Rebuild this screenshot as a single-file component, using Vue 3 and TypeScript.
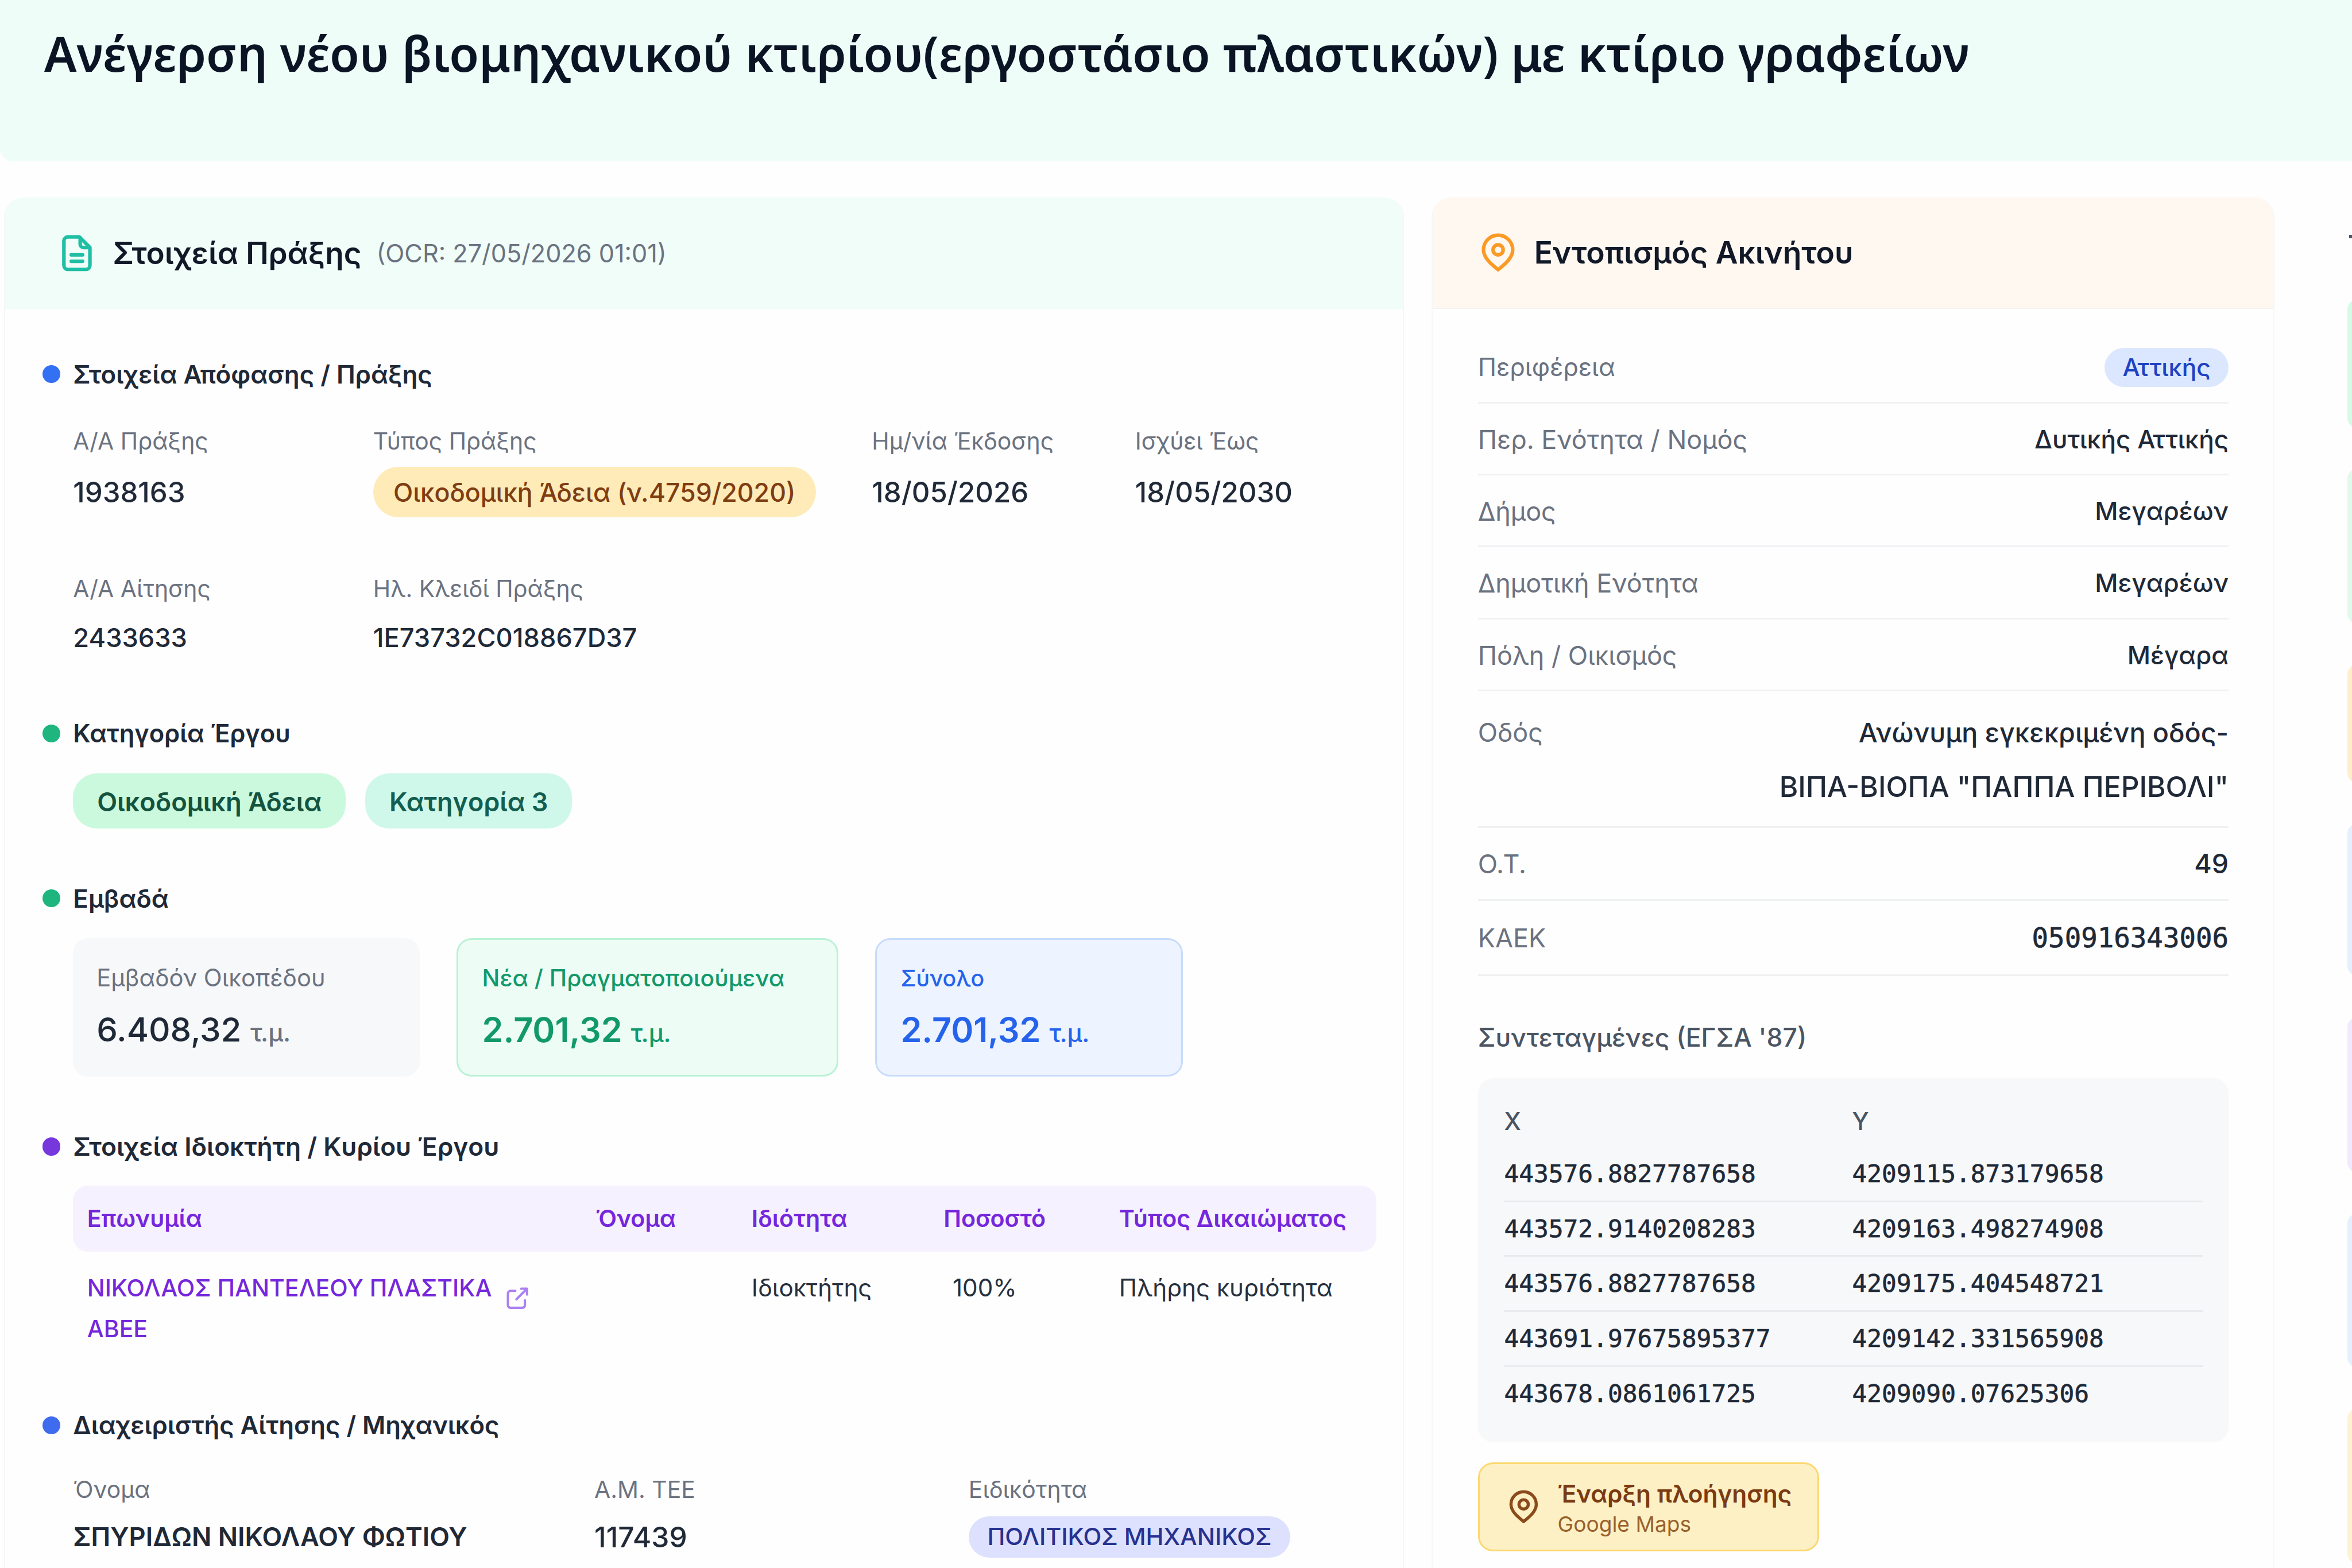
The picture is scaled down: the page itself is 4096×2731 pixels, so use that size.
<script setup lang="ts">
interface Row { label: string; value: string; kind?: 'badge' | 'mono' | 'wide' }

const details: { label: string; value: string; pill?: boolean }[][] = [
  [
    { label: 'Α/Α Πράξης', value: '1938163' },
    { label: 'Τύπος Πράξης', value: 'Οικοδομική Άδεια (ν.4759/2020)', pill: true },
    { label: 'Ημ/νία Έκδοσης', value: '18/05/2026' },
    { label: 'Ισχύει Έως', value: '18/05/2030' },
  ],
  [
    { label: 'Α/Α Αίτησης', value: '2433633' },
    { label: 'Ηλ. Κλειδί Πράξης', value: '1E73732C018867D37' },
  ],
]

const areas = [
  { tone: 'gray', label: 'Εμβαδόν Οικοπέδου', value: '6.408,32' },
  { tone: 'green', label: 'Νέα / Πραγματοποιούμενα', value: '2.701,32' },
  { tone: 'blue', label: 'Σύνολο', value: '2.701,32' },
]

const ownerColumns = ['Επωνυμία', 'Όνομα', 'Ιδιότητα', 'Ποσοστό', 'Τύπος Δικαιώματος']

const region: Row[] = [
  { label: 'Περιφέρεια', value: 'Αττικής', kind: 'badge' },
  { label: 'Περ. Ενότητα / Νομός', value: 'Δυτικής Αττικής' },
  { label: 'Δήμος', value: 'Μεγαρέων' },
  { label: 'Δημοτική Ενότητα', value: 'Μεγαρέων' },
  { label: 'Πόλη / Οικισμός', value: 'Μέγαρα' },
]

const plot: Row[] = [
  { label: 'Ο.Τ.', value: '49', kind: 'wide' },
  { label: 'ΚΑΕΚ', value: '050916343006', kind: 'mono' },
]

const coordinates = [
  ['443576.8827787658', '4209115.873179658'],
  ['443572.9140208283', '4209163.498274908'],
  ['443576.8827787658', '4209175.404548721'],
  ['443691.97675895377', '4209142.331565908'],
  ['443678.0861061725', '4209090.07625306'],
]

const railTones = ['mint', 'leaf', 'amber', 'sky', 'violet', 'azure', 'honey']
</script>

<template>
  <div class="page">
    <header class="hero">
      <h1>Ανέγερση νέου βιομηχανικού κτιρίου(εργοστάσιο πλαστικών) με κτίριο γραφείων</h1>
    </header>

    <main class="columns">
      <section class="card act">
        <div class="card-head teal">
          <svg class="icon" viewBox="0 0 24 24">
            <path d="M13.500 2H6.500A2.500 2.500 0 0 0 4 4.500v15A2.500 2.500 0 0 0 6.500 22h11a2.500 2.500 0 0 0 2.500-2.500V8.500z" />
            <path d="M14 2.500v4a2 2 0 0 0 2 2h3.500M8.500 13h7M8.500 17h7" />
          </svg>
          <h2>Στοιχεία Πράξης</h2>
          <span class="ocr">(OCR: 27/05/2026 01:01)</span>
        </div>

        <div class="act-body">
          <h3><i class="dot blue" />Στοιχεία Απόφασης / Πράξης</h3>
          <div v-for="(row, i) in details" :key="i" class="detail-row" :class="{ second: i === 1 }">
            <div v-for="d in row" :key="d.label">
              <div class="label">{{ d.label }}</div>
              <div class="value"><span :class="{ 'pill-amber': d.pill }">{{ d.value }}</span></div>
            </div>
          </div>

          <h3 class="h-category"><i class="dot green" />Κατηγορία Έργου</h3>
          <div class="tags">
            <span class="tag first">Οικοδομική Άδεια</span>
            <span class="tag next">Κατηγορία 3</span>
          </div>

          <h3 class="h-area"><i class="dot green" />Εμβαδά</h3>
          <div class="areas">
            <div v-for="a in areas" :key="a.label" class="area" :class="a.tone">
              <div class="area-label">{{ a.label }}</div>
              <div class="area-value">{{ a.value }} <small>τ.μ.</small></div>
            </div>
          </div>

          <h3 class="h-owner"><i class="dot purple" />Στοιχεία Ιδιοκτήτη / Κυρίου Έργου</h3>
          <div class="owner-row owner-head">
            <span v-for="c in ownerColumns" :key="c">{{ c }}</span>
          </div>
          <div class="owner-row owner-data">
            <span class="owner-name">
              <b>ΝΙΚΟΛΑΟΣ ΠΑΝΤΕΛΕΟΥ ΠΛΑΣΤΙΚΑ<br />ΑΒΕΕ</b>
              <svg class="ext" viewBox="0 0 24 24">
                <path d="M10 5H5.500A2.500 2.500 0 0 0 3 7.500v11A2.500 2.500 0 0 0 5.500 21h11a2.500 2.500 0 0 0 2.500-2.500V14M15.500 3H21v5.500M11 13L21 3" />
              </svg>
            </span>
            <span />
            <span>Ιδιοκτήτης</span>
            <span class="percent">100%</span>
            <span>Πλήρης κυριότητα</span>
          </div>

          <h3 class="h-engineer"><i class="dot blue2" />Διαχειριστής Αίτησης / Μηχανικός</h3>
          <div class="engineer">
            <div>
              <div class="label">Όνομα</div>
              <div class="value strong">ΣΠΥΡΙΔΩΝ ΝΙΚΟΛΑΟΥ ΦΩΤΙΟΥ</div>
            </div>
            <div>
              <div class="label">Α.Μ. ΤΕΕ</div>
              <div class="value number">117439</div>
            </div>
            <div>
              <div class="label">Ειδικότητα</div>
              <div class="value"><span class="pill-indigo">ΠΟΛΙΤΙΚΟΣ ΜΗΧΑΝΙΚΟΣ</span></div>
            </div>
          </div>
        </div>
      </section>

      <section class="card place">
        <div class="card-head orange">
          <svg class="icon" viewBox="0 0 24 24">
            <path d="M21 10.300c0 5.500-6.300 9.900-9 12.200-2.700-2.300-9-6.700-9-12.200a9 9 0 0 1 18 0z" />
            <circle cx="12" cy="10.300" r="3.100" />
          </svg>
          <h2>Εντοπισμός Ακινήτου</h2>
        </div>

        <div class="place-body">
          <div v-for="r in region" :key="r.label" class="place-row" :class="r.kind">
            <span class="place-label">{{ r.label }}</span>
            <span class="place-value">{{ r.value }}</span>
          </div>
          <div class="place-row tall">
            <span class="place-label">Οδός</span>
            <span class="place-value">Ανώνυμη εγκεκριμένη οδός-<br /><span class="caps">ΒΙΠΑ-ΒΙΟΠΑ "ΠΑΠΠΑ ΠΕΡΙΒΟΛΙ"</span></span>
          </div>
          <div v-for="r in plot" :key="r.label" class="place-row" :class="r.kind">
            <span class="place-label">{{ r.label }}</span>
            <span class="place-value">{{ r.value }}</span>
          </div>

          <h4>Συντεταγμένες (ΕΓΣΑ '87)</h4>
          <div class="coords">
            <div class="coord-head"><span>X</span><span>Y</span></div>
            <div v-for="(c, i) in coordinates" :key="i" class="coord"><span>{{ c[0] }}</span><span>{{ c[1] }}</span></div>
          </div>

          <a class="navigate">
            <svg viewBox="0 0 24 24">
              <path d="M21 10.300c0 5.500-6.300 9.900-9 12.200-2.700-2.300-9-6.700-9-12.200a9 9 0 0 1 18 0z" />
              <circle cx="12" cy="10.300" r="3.300" />
            </svg>
            <span class="nav-text"><b>Έναρξη πλοήγησης</b><small>Google Maps</small></span>
          </a>
        </div>
      </section>

      <aside class="rail">
        <i class="tick" />
        <i v-for="t in railTones" :key="t" class="rail-item" :class="t" />
      </aside>
    </main>
  </div>
</template>

<style>
html { font-size: calc(100vw / 156.8); }
body { overflow: hidden; background: #fefefe; }
</style>

<style scoped>
* { box-sizing: border-box; }
.page { width: 100vw; height: 100vh; overflow: hidden; background: #fefefe; color: #1f2937; font-family: Inter, "Noto Sans", sans-serif; white-space: nowrap; }
h1, h2, h3, h4 { margin: 0; }
svg { fill: none; stroke: currentColor; stroke-linecap: round; stroke-linejoin: round; flex: none; }

.hero { height: 10.75rem; padding: 1.25rem 0 0 2.95rem; background: #effdf9; border-bottom-left-radius: .9rem; }
h1 { font-family: "Noto Sans", Inter, sans-serif; font-size: 3.218rem; line-height: 4.6rem; font-weight: 600; color: #0b1424; }

.columns { display: flex; height: 91.4rem; margin-top: 2.4rem; padding-left: .25rem; }
.card { flex: none; overflow: hidden; background: #fefefe; border: .1rem solid #f6f7f8; border-top: 0; border-radius: 1.3rem 1.3rem 0 0; height: 94rem; }
.act { width: 93.35rem; margin-right: 1.85rem; }
.place { width: 56.2rem; }
.card-head { display: flex; align-items: center; height: 7.45rem; }
.card-head.teal { padding-left: 3.5rem; background: #f0fdf9; }
.card-head.orange { padding-left: 3.05rem; background: #fff8f1; border-bottom: .1rem solid #f5f3f1; }
.icon { width: 2.6rem; height: 2.6rem; stroke-width: 2.2; }
.teal .icon { color: #1fbfa4; }
.orange .icon { color: #fb9a26; }
h2 { margin-left: 1.1rem; font-size: 2.025rem; font-weight: 600; color: #111827; }
.orange h2 { font-size: 2.04rem; }
.ocr { margin-left: 1rem; font-size: 1.655rem; color: #6b7280; }

.act-body { padding: 3.15rem 0 0 4.55rem; }
h3 { display: flex; align-items: center; height: 2.4rem; margin-left: -2.05rem; font-size: 1.68rem; font-weight: 600; color: #1f2937; }
.dot { width: 1.2rem; height: 1.2rem; margin-right: .85rem; border-radius: 50%; }
.dot.blue { background: #3370f4; }
.dot.blue2 { background: #3f6bee; }
.dot.green { background: #1fb57e; }
.dot.purple { background: #7637dd; }

.label { height: 2rem; line-height: 2rem; font-size: 1.565rem; color: #6b7280; }
.value { display: flex; align-items: center; height: 3.3rem; margin-top: .75rem; font-size: 1.88rem; font-weight: 500; color: #1f2937; }
.detail-row { display: grid; grid-template-columns: 20rem 33.25rem 17.55rem auto; margin-top: 2.25rem; }
.detail-row.second { margin-top: 3.8rem; }
.second .value { margin-top: .6rem; font-size: 1.73rem; }
.pill-amber { height: 3.35rem; line-height: 3.45rem; padding: 0 1.35rem; border-radius: 1.7rem; background: #feebb8; color: #7f3d12; font-size: 1.71rem; }

.h-category { margin-top: 3.55rem; }
.h-category { font-size: 1.66rem; }
.tags { display: flex; gap: 1.3rem; margin-top: 1.45rem; }
.tag { height: 3.7rem; line-height: 3.8rem; padding: 0 1.6rem; border-radius: 1.6rem; font-size: 1.74rem; font-weight: 600; }
.tag.next { font-size: 1.72rem; }
.tag.first { background: #cbf9dd; color: #14533f; }
.tag.next { background: #cff8eb; color: #135e50; }
.h-area { margin-top: 3.45rem; }

.areas { display: flex; gap: 2.45rem; margin-top: 1.45rem; }
.area { height: 9.25rem; padding: 1.45rem 0 0 1.45rem; border: .12rem solid transparent; border-radius: 1rem; }
.area.gray { width: 23.1rem; background: #f7f8f9; color: #1f2937; }
.area.green { width: 25.45rem; padding-left: 1.6rem; background: #edfdf5; border-color: #b9f2d4; color: #12996b; }
.area.blue { width: 20.55rem; padding-left: 1.6rem; background: #edf3ff; border-color: #c7dcfc; color: #2563eb; }
.area-label { height: 2.2rem; line-height: 2.2rem; font-size: 1.595rem; }
.gray .area-label, .gray small { color: #6b7280; }
.area.green .area-label { font-weight: 500; font-size: 1.56rem; }
.area.blue .area-label { font-weight: 500; font-size: 1.5rem; }
.area-value { height: 3.2rem; margin-top: .75rem; line-height: 3.2rem; font-size: 2.27rem; font-weight: 600; }
.gray .area-value { font-weight: 550; font-size: 2.23rem; }
.area-value small { font-size: 1.65rem; font-weight: 500; }

.h-owner { margin-top: 3.45rem; font-size: 1.695rem; }
.owner-row { display: grid; grid-template-columns: 33.9rem 10.4rem 12.8rem 11.7rem auto; width: 86.9rem; padding-left: .93rem; }
.owner-head { height: 4.4rem; line-height: 4.4rem; margin-top: 1.4rem; border-radius: 1rem; background: #f6f1fe; color: #7527dc; font-size: 1.575rem; font-weight: 600; }
.owner-data { height: 5.4rem; margin-top: 1.1rem; line-height: 2.7rem; font-size: 1.615rem; color: #27303d; }
.owner-name { display: flex; color: #7527dc; }
.owner-name b { font-weight: 500; font-size: 1.57rem; }
.ext { width: 1.7rem; height: 1.7rem; margin: 1.15rem 0 0 .85rem; stroke-width: 2.2; color: #ab80f2; }
.percent { padding-left: .6rem; }

.h-engineer { margin-top: 3.9rem; font-size: 1.67rem; }
.engineer { display: grid; grid-template-columns: 34.75rem 24.95rem auto; margin-top: 2.05rem; }
.engineer .value { height: 2.75rem; margin-top: .8rem; font-size: 1.73rem; }
.engineer .value.strong { font-weight: 600; }
.engineer .value.number { font-size: 1.9rem; }
.pill-indigo { height: 2.75rem; line-height: 2.75rem; padding: 0 1.25rem; border-radius: 1.4rem; background: #dde1fd; color: #27318f; font-size: 1.585rem; font-weight: 500; }

.place-body { padding: 1.5rem 3rem 0 3rem; }
.place-row { display: flex; justify-content: space-between; height: 4.8rem; line-height: 4.8rem; border-bottom: .12rem solid #eff1f3; }
.place-label { font-size: 1.72rem; color: #6b7280; }
.place-value { font-size: 1.69rem; font-weight: 450; text-align: right; color: #1f2937; }
.place-row.badge { align-items: center; padding-top: .1rem; }
.badge .place-label { font-size: 1.66rem; }
.badge .place-value { height: 2.6rem; line-height: 2.6rem; padding: 0 1.2rem; border-radius: 1.3rem; background: #dbe7fe; color: #1e42c4; font-size: 1.63rem; font-weight: 500; }
.place-row.tall { height: 9.1rem; padding-top: .95rem; line-height: 3.6rem; }
.tall .place-value { font-size: 1.785rem; }
.tall .caps { font-size: 1.9rem; }
.place-row.wide { height: 4.85rem; }
.wide .place-value { font-size: 1.78rem; }
.place-row.mono { height: 5.05rem; line-height: 4.95rem; }
.mono .place-value { font-family: "DejaVu Sans Mono", monospace; font-weight: 400; font-size: 1.815rem; -webkit-text-stroke: .025rem currentColor; }

h4 { height: 2.4rem; margin-top: 2.9rem; line-height: 2.4rem; font-size: 1.705rem; font-weight: 500; color: #4b5563; }
.coords { height: 24.25rem; margin-top: 1.5rem; padding: 1.85rem 1.7rem 0 1.75rem; border-radius: 1rem; background: #f7f8f9; }
.coord-head, .coord { display: grid; grid-template-columns: 23.2rem auto; }
.coord-head { height: 2.75rem; line-height: 2.1rem; font-size: 1.6rem; font-weight: 500; color: #4b5563; }
.coord { height: 3.66rem; line-height: 3.55rem; border-bottom: .12rem solid #e9ecef; font-family: "DejaVu Sans Mono", monospace; font-size: 1.64rem; -webkit-text-stroke: .025rem currentColor; }
.coord:last-child { border-bottom: 0; }

.navigate { display: flex; align-items: center; width: 22.75rem; height: 5.95rem; margin-top: 1.35rem; padding-left: 1.8rem; border: .13rem solid #fbd871; border-radius: 1rem; background: #fdf0c4; color: #7b3a12; }
.navigate svg { width: 2.25rem; height: 2.25rem; stroke-width: 2.2; color: #8a4a1c; }
.nav-text { display: flex; flex-direction: column; margin: .15rem 0 0 1.15rem; }
.nav-text b { line-height: 2.2rem; font-size: 1.62rem; font-weight: 600; }
.nav-text small { line-height: 1.9rem; font-size: 1.42rem; color: #98602b; }

.rail { flex: none; display: flex; flex-direction: column; width: 3rem; margin-left: 4.85rem; }
.tick { flex: none; width: .6rem; height: .22rem; margin: 2.5rem 0 4.08rem .1rem; background: #4b5563; }
.rail-item { flex: none; width: 3rem; border-radius: .7rem; margin-bottom: 2.7rem; }
.mint { height: 8.6rem; background: #d6fae6; }
.leaf { height: 10.35rem; background: #e0faec; }
.amber { height: 7.9rem; background: #ffedcb; }
.sky { height: 10.2rem; background: #e5effe; }
.violet { height: 10.4rem; background: #f1e9fe; }
.azure { height: 10.3rem; background: #e5effe; }
.honey { height: 10.4rem; background: #fff2d3; }
</style>
